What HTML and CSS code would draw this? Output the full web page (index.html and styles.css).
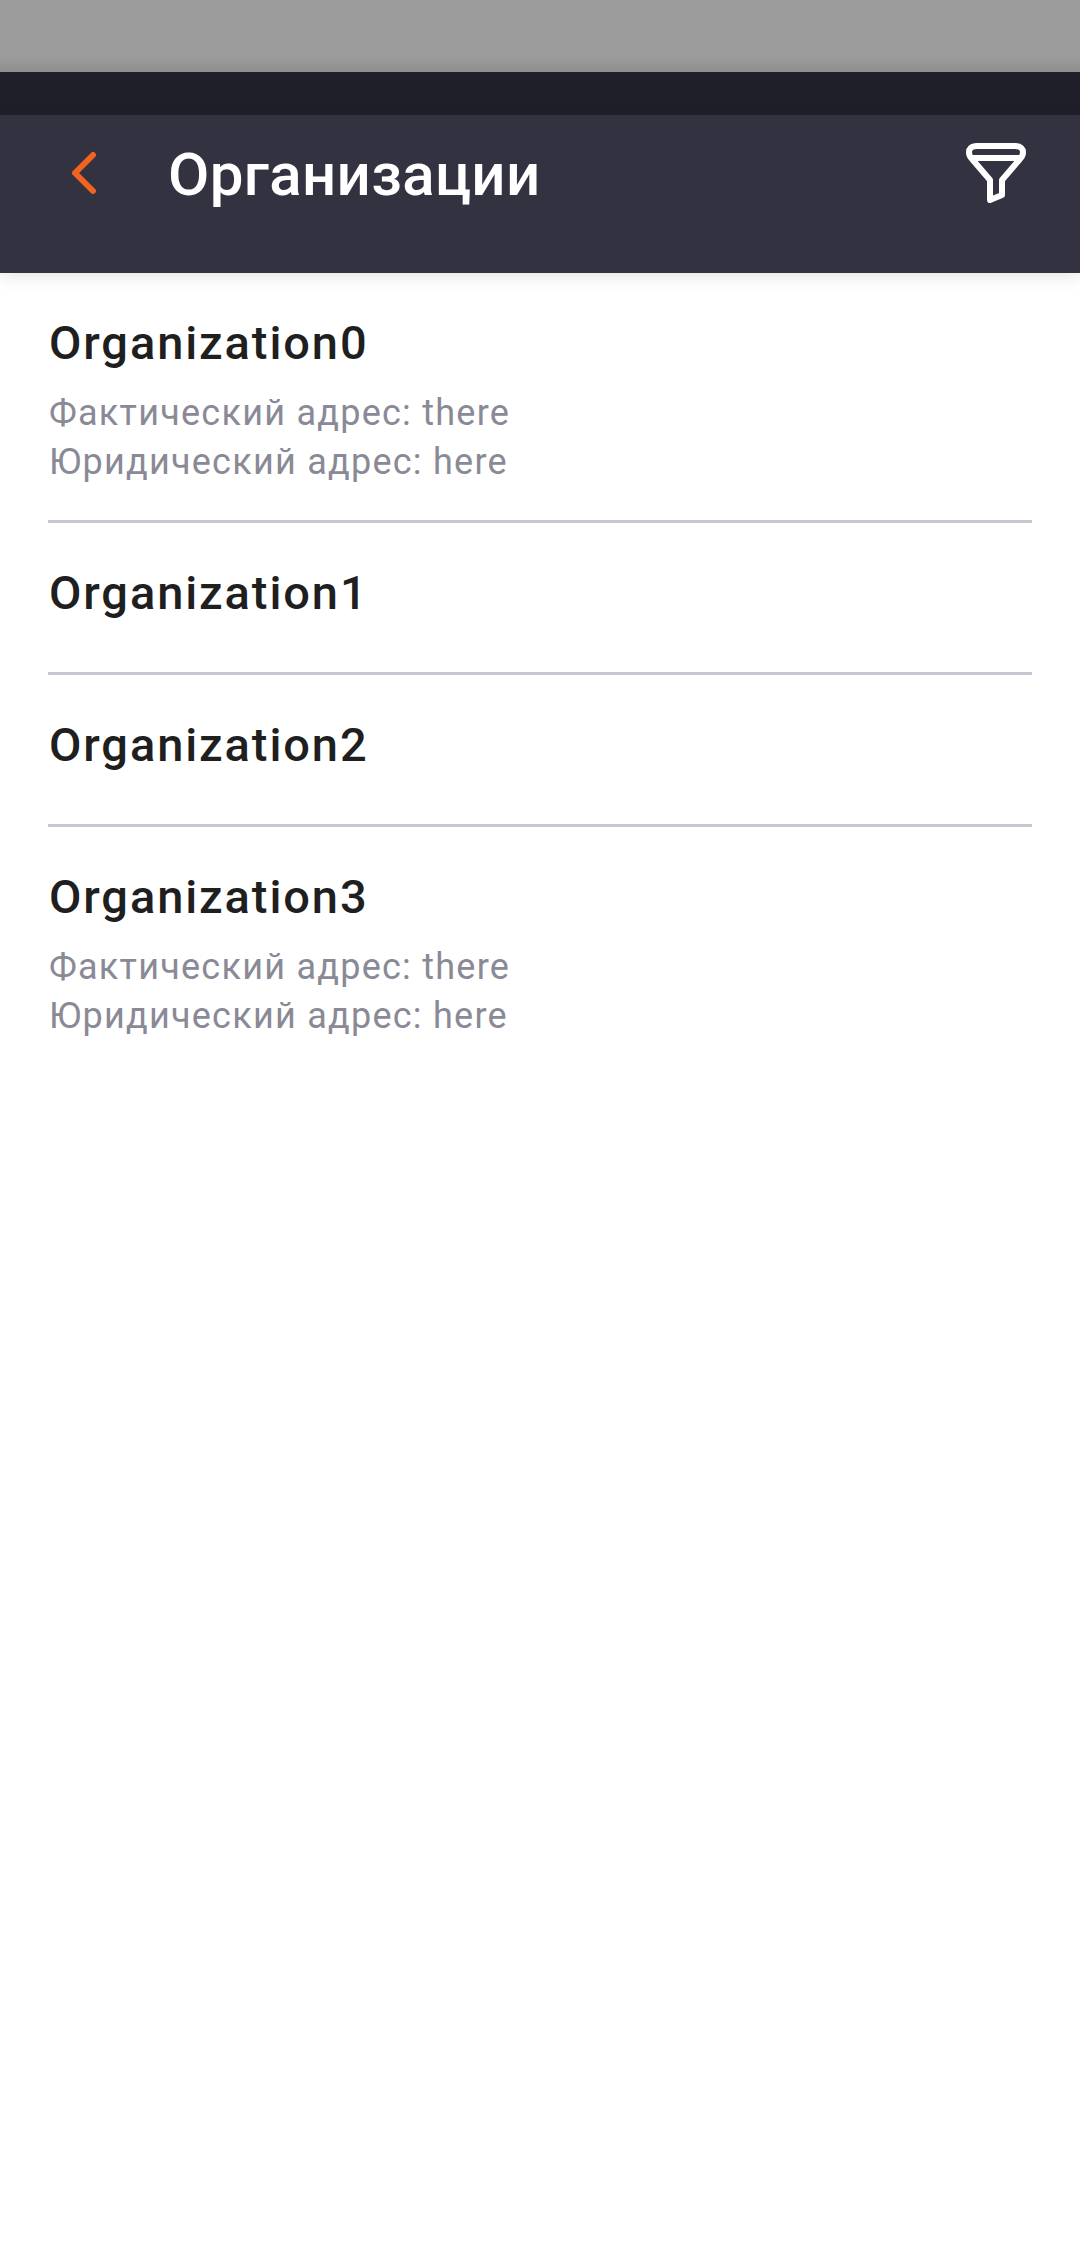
FILE: index.html
```html
<!DOCTYPE html>
<html lang="en">
<head>
    <meta charset="UTF-8">
    <meta name="viewport" content="width=device-width, initial-scale=1.0">
    <title>Организации</title>
    <link rel="stylesheet" href="styles.css">
</head>
<body>

    <div class="top-strip"></div>
    <div class="status-bar"></div>

    <header class="app-bar">
        <svg class="back-icon" width="26" height="44" viewBox="0 0 26 44">
            <path d="M22 4 L4 22 L22 40" fill="none" stroke="#f26322" stroke-width="6" stroke-linecap="round" stroke-linejoin="round"/>
        </svg>
        <h1 class="app-title">Организации</h1>
        <svg class="filter-icon" width="60" height="60" viewBox="0 0 60 60">
            <path d="M11 3 H49 C55 3 57 6 57 9 C57 12 56 14 54 16 L36 37 V52 L24 57 V37 L6 16 C4 14 3 12 3 9 C3 6 5 3 11 3 Z" fill="none" stroke="#fff" stroke-width="6" stroke-linejoin="round" stroke-linecap="round"/>
            <path d="M6 15 H54" fill="none" stroke="#fff" stroke-width="6"/>
        </svg>
    </header>

    <main class="org-list">
        <div class="org-row">
            <div class="org-name">Organization0</div>
            <div class="org-address">Фактический адрес: there</div>
            <div class="org-address">Юридический адрес: here</div>
        </div>
        <div class="org-row">
            <div class="org-name">Organization1</div>
        </div>
        <div class="org-row">
            <div class="org-name">Organization2</div>
        </div>
        <div class="org-row no-line">
            <div class="org-name">Organization3</div>
            <div class="org-address">Фактический адрес: there</div>
            <div class="org-address">Юридический адрес: here</div>
        </div>
    </main>

</body>
</html>
```

FILE: styles.css
```css
body { margin: 0; height: 2268px; overflow: hidden; background: #fff; font-family: Roboto, "Liberation Sans", sans-serif; }
.top-strip { height: 72px; background: linear-gradient(#9b9b9b 80%, #8e8e8e); }
.status-bar { height: 43px; background: #1f1f29; }
.app-bar { height: 158px; background: #333240; display: flex; align-items: flex-start; box-shadow: 0 4px 16px rgba(0, 0, 0, 0.1); position: relative; }
.back-icon { margin: 36px 0 0 71px; }
.app-title { margin: 25px 0 0 71px; flex: 1; font-size: 60px; line-height: 70px; font-weight: 500; color: #fff; letter-spacing: 0.35px; }
.filter-icon { margin: 28px 54px 0 0; }
.org-list { padding: 0 48px; }
.org-row { min-height: 152px; box-sizing: border-box; padding: 42px 1px 33px; border-bottom: 3px solid #c7c8d4; }
.org-row.no-line { border-bottom: none; }
.org-name { font-size: 47px; line-height: 56px; font-weight: 500; color: #1f1f1f; letter-spacing: 1.9px; }
.org-address { font-size: 36px; line-height: 49px; color: #8a8a96; letter-spacing: 1.25px; }
.org-name + .org-address { margin-top: 18px; }
```
